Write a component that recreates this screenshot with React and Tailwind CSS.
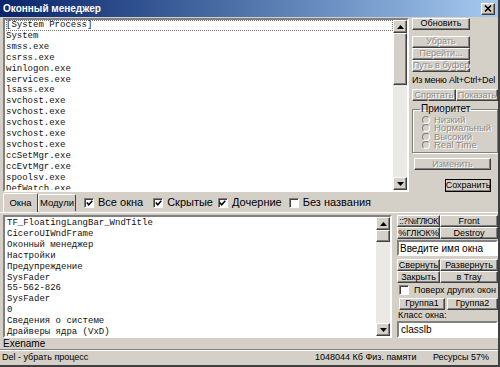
import React from "react";

const BTN =
  "flex items-center justify-center bg-[#d4d0c8] border border-t-white border-l-white border-b-[#404040] border-r-[#404040] shadow-[inset_-1px_-1px_0_#808080] leading-none whitespace-nowrap";
const DIS = "text-[#8f8c86] [text-shadow:1px_1px_0_#ffffff]";
const SUNKEN =
  "border-2 border-t-[#808080] border-l-[#808080] border-b-white border-r-white";

const TOP_ITEMS = [
  "[System Process]",
  "System",
  "smss.exe",
  "csrss.exe",
  "winlogon.exe",
  "services.exe",
  "lsass.exe",
  "svchost.exe",
  "svchost.exe",
  "svchost.exe",
  "svchost.exe",
  "svchost.exe",
  "ccSetMgr.exe",
  "ccEvtMgr.exe",
  "spoolsv.exe",
  "DefWatch.exe",
];

const BOTTOM_ITEMS = [
  "TF_FloatingLangBar_WndTitle",
  "CiceroUIWndFrame",
  "Оконный менеджер",
  "Настройки",
  "Предупреждение",
  "SysFader",
  "55-562-826",
  "SysFader",
  "0",
  "Сведения о системе",
  "Драйверы ядра (VxD)",
];

function Arrow({ down }) {
  return (
    <svg width="7" height="4" viewBox="0 0 7 4">
      <path d={down ? "M0 0 L7 0 L3.5 4Z" : "M0 4 L3.5 0 L7 4Z"} fill="#000" />
    </svg>
  );
}

function ScrollBar({ thumb }) {
  return (
    <div className="w-[14px] shrink-0 flex flex-col bg-[#ebe9e5]">
      <div className={`${BTN} h-[13px]`}>
        <Arrow />
      </div>
      <div className={`${BTN} ${thumb}`} />
      <div className="flex-1" />
      <div className={`${BTN} h-[13px]`}>
        <Arrow down />
      </div>
    </div>
  );
}

function Check({ checked }) {
  return (
    <span className="w-[10px] h-[10px] shrink-0 bg-white border border-t-[#808080] border-l-[#808080] border-b-white border-r-white shadow-[inset_1px_1px_0_#404040] flex items-center justify-center">
      {checked && (
        <svg width="7" height="6" viewBox="0 0 7 6">
          <path d="M0.8 2.6 L2.7 4.8 L6.3 0.8" stroke="#000" strokeWidth="1.5" fill="none" />
        </svg>
      )}
    </span>
  );
}

function Radio({ label }) {
  return (
    <div className="flex items-center h-[8.5px] gap-[4px]">
      <span className="w-[8px] h-[8px] shrink-0 rounded-full border border-t-[#808080] border-l-[#808080] border-b-white border-r-white bg-[#d4d0c8]" />
      <span className={`text-[9.5px] leading-[8px] ${DIS}`}>{label}</span>
    </div>
  );
}

export default function App() {
  return (
    <div className="w-[500px] h-[367px] bg-[#d4d0c8] overflow-hidden flex flex-col font-['Liberation_Sans',Arial,sans-serif] text-black border-r-2 border-b-2 border-r-[#404040] border-b-[#404040]">
      {/* title bar */}
      <div className="h-[17px] shrink-0 flex items-center justify-between pl-[3px] pr-[3px] bg-gradient-to-r from-[#0a246a] to-[#a6caf0]">
        <span className="text-white font-bold text-[10px] leading-none">Оконный менеджер</span>
        <div className={`${BTN} w-[14px] h-[12px]`}>
          <svg width="8" height="7" viewBox="0 0 8 7">
            <path d="M1 0.5 L7 6.5 M7 0.5 L1 6.5" stroke="#000" strokeWidth="1.6" />
          </svg>
        </div>
      </div>

      {/* top section: process list + actions */}
      <div className="h-[175px] shrink-0 flex pl-[3px] pt-[1px]">
        <div className={`${SUNKEN} w-[406px] shrink-0 flex bg-white`}>
          <div className="flex-1 overflow-hidden font-['Liberation_Mono',monospace] text-[9px] leading-[10.9px] text-[#111] pl-[1px]">
            {TOP_ITEMS.map((t, i) => (
              <div
                key={i}
                className={i === 0 ? "outline outline-1 outline-dotted outline-[#777] -outline-offset-1" : ""}
              >
                {t}
              </div>
            ))}
          </div>
          <ScrollBar thumb="h-[52px]" />
        </div>
        <div className="flex-1 min-w-0 flex flex-col pl-[3px] text-[9px]">
          <div className={`${BTN} w-[58px] h-[12px]`}>Обновить</div>
          <div className="h-[6px]" />
          <div className={`${BTN} w-[58px] h-[12px] ${DIS}`}>Убрать</div>
          <div className={`${BTN} w-[58px] h-[12px] ${DIS}`}>Перейти...</div>
          <div className={`${BTN} w-[58px] h-[12px] ${DIS}`}>Путь в буфер</div>
          <div className="h-[18px] flex items-center text-[9px] whitespace-nowrap -tracking-[0.2px]">
            Из меню Alt+Ctrl+Del
          </div>
          <div className="flex">
            <div className={`${BTN} w-[44px] h-[12px] ${DIS}`}>Спрятать</div>
            <div className={`${BTN} w-[42px] h-[12px] ${DIS}`}>Показать</div>
          </div>
          <fieldset className="mt-[3px] w-[86px] border border-[#808080] shadow-[1px_1px_0_#fff,inset_1px_1px_0_#fff] pl-[9px] pb-[3px]">
            <legend className="text-[10px] leading-none px-[1px] -ml-[2px]">Приоритет</legend>
            <div className="flex flex-col pt-[1px]">
              <Radio label="Низкий" />
              <Radio label="Нормальный" />
              <Radio label="Высокий" />
              <Radio label="Real Time" />
            </div>
          </fieldset>
          <div className={`${BTN} mt-[5px] ml-[2px] w-[77px] h-[12px] ${DIS}`}>Изменить</div>
          <div className="h-[9px]" />
          <div className={`${BTN} ml-[33px] w-[46px] h-[13px] outline outline-1 outline-black -outline-offset-1`}>
            Сохранить
          </div>
        </div>
      </div>

      {/* tab row */}
      <div className="h-[20px] shrink-0 flex items-end pl-[3px]">
        <div className="h-[19px] w-[35px] flex items-center justify-center border-t border-l border-white border-r border-r-[#404040] text-[9.5px] rounded-t-[2px]">
          Окна
        </div>
        <div className="h-[17px] w-[38px] flex items-center justify-center border-t border-l border-white border-r border-r-[#404040] text-[9.5px] rounded-t-[2px] mb-[1px]">
          Модули
        </div>
        <div className="flex items-center h-[19px] text-[11px] ml-[8px] whitespace-nowrap">
          <Check checked />
          <span className="ml-[4px] mr-[10px]">Все окна</span>
          <Check checked />
          <span className="ml-[4px] mr-[5px]">Скрытые</span>
          <Check checked />
          <span className="ml-[4px] mr-[7px]">Дочерние</span>
          <Check />
          <span className="ml-[4px]">Без названия</span>
        </div>
      </div>

      {/* bottom section: windows list + window actions */}
      <div className="h-[126px] shrink-0 flex pl-[3px] pt-[2px] border-t border-white">
        <div className={`${SUNKEN} w-[389px] shrink-0 flex bg-white`}>
          <div className="flex-1 overflow-hidden font-['Liberation_Mono',monospace] text-[9px] leading-[10.9px] text-[#111] pl-[2px] pt-[1px]">
            {BOTTOM_ITEMS.map((t, i) => (
              <div key={i}>{t}</div>
            ))}
          </div>
          <ScrollBar thumb="h-[12px]" />
        </div>
        <div className="flex-1 min-w-0 flex flex-col pl-[5px] text-[9px]">
          <div className="flex">
            <div className={`${BTN} w-[43px] h-[12px] text-[8.5px] -tracking-[0.4px]`}>::?№ГЛЮК</div>
            <div className={`${BTN} flex-1 h-[12px]`}>Front</div>
          </div>
          <div className="flex">
            <div className={`${BTN} w-[43px] h-[12px]`}>%ГЛЮК%</div>
            <div className={`${BTN} flex-1 h-[12px]`}>Destroy</div>
          </div>
          <div className={`${SUNKEN} h-[16px] bg-white flex items-center pl-[1px] text-[10px] mt-[1px]`}>
            Введите имя окна
          </div>
          <div className="flex mt-[3px]">
            <div className={`${BTN} w-[43px] h-[12px]`}>Свернуть</div>
            <div className={`${BTN} flex-1 h-[12px]`}>Развернуть</div>
          </div>
          <div className="flex">
            <div className={`${BTN} w-[43px] h-[12px]`}>Закрыть</div>
            <div className={`${BTN} flex-1 h-[12px]`}>в Tray</div>
          </div>
          <div className="flex items-center h-[17px] text-[9px] pl-[2px]">
            <Check />
            <span className="ml-[5px] whitespace-nowrap">Поверх других окон</span>
          </div>
          <div className="flex gap-[2px] pl-[2px]">
            <div className={`${BTN} w-[46px] h-[12px]`}>Группа1</div>
            <div className={`${BTN} flex-1 h-[12px]`}>Группа2</div>
          </div>
          <div className="h-[12px] flex items-end text-[9px] pl-[1px] leading-none">Класс окна:</div>
          <div className={`${SUNKEN} h-[17px] bg-white flex items-center pl-[2px] text-[10px] mt-[1px]`}>
            classlb
          </div>
        </div>
      </div>

      {/* exename row */}
      <div className="h-[12px] shrink-0 flex items-center pl-[3px] text-[10px] border-b border-[#808080]">
        Exename
      </div>

      {/* status bar */}
      <div className="flex-1 flex items-center text-[9px] border-t border-white pl-[2px]">
        <span className="w-[313px]">Del - убрать процесс</span>
        <span className="w-[118px]">1048044 Кб Физ. памяти</span>
        <span>Ресурсы 57%</span>
      </div>
    </div>
  );
}
